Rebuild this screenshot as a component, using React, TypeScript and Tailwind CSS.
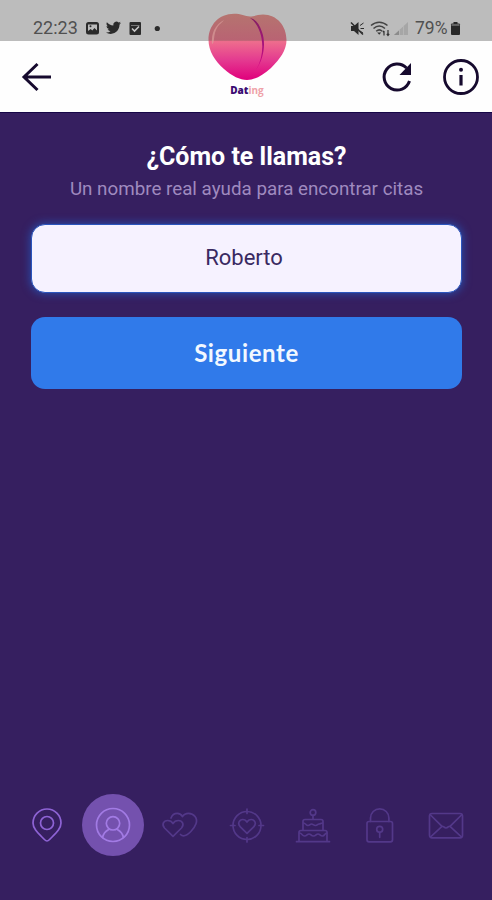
import React from 'react';

const StatusIcons = () => (
  <svg width="76" height="18" viewBox="0 0 76 18" className="text-[#2b2b2b]">
    {/* Gallery */}
    <rect x="1" y="3" width="13" height="12.5" rx="2.5" fill="currentColor" />
    <path d="M3 5.5h9v6l-2.5-2.5-2.2 2.4-1.6-1.4L3 12z" fill="#bcbcbc" />
    <circle cx="5.5" cy="7.3" r="1" fill="currentColor" />
    {/* Bird */}
    <path
      transform="translate(20.9 1.2) scale(0.63)"
      fill="currentColor"
      d="M23.953 4.57a10 10 0 01-2.825.775 4.958 4.958 0 002.163-2.723c-.951.555-2.005.959-3.127 1.184a4.92 4.92 0 00-8.384 4.482C7.69 8.095 4.067 6.13 1.64 3.162a4.822 4.822 0 00-.666 2.475c0 1.71.87 3.213 2.188 4.096a4.904 4.904 0 01-2.228-.616v.06a4.923 4.923 0 003.946 4.827 4.996 4.996 0 01-2.212.085 4.936 4.936 0 004.604 3.417 9.867 9.867 0 01-6.102 2.105c-.39 0-.779-.023-1.17-.067a13.995 13.995 0 007.557 2.209c9.053 0 13.998-7.496 13.998-13.985 0-.21 0-.42-.015-.63A9.935 9.935 0 0024 4.59z"
    />
    {/* Mail check */}
    <rect x="44.5" y="3" width="11.5" height="13" rx="1" fill="currentColor" />
    <path d="M46 6.5h8.5" stroke="#777" strokeWidth="1" />
    <path d="M47 9.5l2.5 2.5 4.5-4.5" fill="none" stroke="#c8c8c8" strokeWidth="1.6" />
    <circle cx="72.3" cy="9.5" r="2.6" fill="currentColor" />
  </svg>
);

const SignalIcons = () => (
  <svg width="60" height="18" viewBox="0 0 60 18" fill="none" className="-ml-px text-[#2b2b2b]">
    {/* Muted */}
    <path d="M1 7h3l4.5-4v13L4 12H1z" fill="currentColor" />
    <path d="M1 3.5l12 12" stroke="currentColor" strokeWidth="1.5" />
    <path d="M10 6.5l3.5-2.5M10.5 9.5H14M10 12l3 2" stroke="currentColor" strokeWidth="1" />
    {/* Wifi */}
    <path d="M21 6.5c5-4.5 11.5-4.5 16.5 0M23.5 9.5c3.5-3.2 8-3.2 11.5 0M26.2 12.3c2-1.8 4.2-1.8 6 0" stroke="#444" strokeWidth="1.5" />
    <path d="M29.2 15.8l-2-2.3h4z" fill="#333" />
    <path d="M34 16.5v-4.5M32.8 13.2L34 11.8M38 11v5M36.8 14.8L38 16.4l1.2-1.6" stroke="#333" strokeWidth="1.2" />
    {/* Cell signal */}
    <path d="M44 16L58 3v13z" fill="#a6a6a6" />
    <path d="M44 16l5-4.6V16z" fill="#8b8b8b" />
    <path d="M49.5 11v5M53.5 7.2V16" stroke="#b8b8b8" strokeWidth="0.8" />
  </svg>
);

const Logo = () => (
  <svg width="80" height="69" viewBox="0 0 80 69">
    <defs>
      <linearGradient id="peach" x1="0" y1="0" x2="0" y2="1">
        <stop offset="0" stopColor="#b5746f" />
        <stop offset="0.4" stopColor="#b96373" />
        <stop offset="0.42" stopColor="#ee6d8d" />
        <stop offset="0.7" stopColor="#e43a90" />
        <stop offset="1" stopColor="#e0007c" />
      </linearGradient>
      <linearGradient id="crease" x1="0" y1="0" x2="0" y2="1">
        <stop offset="0" stopColor="#842062" />
        <stop offset="0.5" stopColor="#a5127c" />
        <stop offset="1" stopColor="#dc0783" />
      </linearGradient>
    </defs>
    <path
      d="M43 3.5C47 3.5 50 1.5 56 1.5C70 1.5 79.5 13 79.5 27C79.5 37 73 46 64 55C55 63 47 67 40 67C33 67 25 63 17 56C8 48 1.5 38 1.5 27C1.5 12 12 .7 27 .7C34 .7 38 3 43 3.5z"
      fill="url(#peach)"
    />
    <path d="M43 5C54 12 61 36 49 57C57 46 59 30 55 19C52 10 48 6 43 5z" fill="url(#crease)" />
    <path d="M17 7C8 12 4 20 5 31C8 31 6 21 10 15C12 11 15 10 17 7z" fill="#dca09d" opacity="0.65" />
  </svg>
);

const steps = [
  {
    name: 'location',
    className: 'text-[#8e63d5]',
    art: (
      <>
        <path d="M24 40c-1 0-1.8-.7-2.600-1.500C15 32 10 27.800 10 22a14 14 0 0128 0c0 5.800-5 10-11.400 16.500C25.800 39.300 25 40 24 40z" />
        <circle cx="24" cy="22" r="6.5" />
      </>
    ),
  },
  {
    name: 'profile',
    className: 'text-[#a27be4]',
    active: true,
    art: (
      <>
        <circle cx="24" cy="24" r="16.5" />
        <circle cx="24" cy="22.3" r="6.7" />
        <path d="M13.5 36.5c.8-3.5 3-6.3 6.2-8M34.5 36.5c-.8-3.5-3-6.3-6.2-8" />
      </>
    ),
  },
  {
    name: 'hearts',
    className: 'text-[#533889]',
    art: (
      <>
        <path d="M17 35.3L8.5 27C5.5 23.5 7.5 19.5 11.7 19.5c2.3 0 4.3 1.2 5.3 3 1-1.8 3-3 5.3-3 4.2 0 6.2 4 3.2 7.5z" />
        <path d="M15 17c1-2.8 3.4-4.7 6.2-4.7 2.3 0 4.3 1.3 5.3 3.3 1.2-2 3.5-3.3 6-3.3 5.5 0 9.5 5 7.5 10.5-1.5 4.5-8 12-12.5 12-1.2 0-2.2-.5-3-1.3" />
      </>
    ),
  },
  {
    name: 'target',
    className: 'text-[#533889]',
    art: (
      <>
        <circle cx="24" cy="24.5" r="14" />
        <path d="M24 8v4.5M24 36.5V41M7.5 24.5H12M36 24.5h4.5" />
        <path d="M24 32.3l-6.7-6.5c-3.2-3.2-1-7.3 2.5-7.3 1.9 0 3.3 1 4.2 2.6.9-1.6 2.3-2.6 4.2-2.6 3.5 0 5.7 4.1 2.5 7.3z" />
      </>
    ),
  },
  {
    name: 'cake',
    className: 'text-[#533889]',
    art: (
      <>
        <circle cx="24" cy="11.5" r="2.8" />
        <path d="M24 14.3v4.2M14 29v-8.5a2 2 0 012-2h16a2 2 0 012 2V29M10 40.5v-9a2 2 0 012-2h24a2 2 0 012 2v9M7.5 40.7h33" />
        <path d="M14.5 22c2 0 2.5 2.5 4.5 2.5s2-1.5 3.5-1.5 2 1.5 4 1.5 2-1.5 3.5-1.5 2-1 3.5-1M10.5 32c2.5 0 2.5 3 5 3s2.5-2 4.5-2 2 2 4.500 2 2.500-2 4.500-2 2 2 4.500 2 2-3 4.500-3" />
      </>
    ),
  },
  {
    name: 'lock',
    className: 'text-[#533889]',
    art: (
      <>
        <rect x="11" y="20.5" width="25.5" height="20.3" rx="2" />
        <path d="M14.5 20.5V17a9.200 9.200 0 0118.400 0v3.500" />
        <circle cx="23.7" cy="28.3" r="3" />
        <path d="M23.7 31.3v5" />
      </>
    ),
  },
  {
    name: 'mail',
    className: 'text-[#533889]',
    art: (
      <>
        <rect x="7.5" y="12.5" width="33" height="24.3" rx="2.5" />
        <path d="M8.5 14l11.5 11.3c1.5-.5 2 1.700 4 1.700s2.500-2.200 4-1.700L39.500 14M8.500 36L20 25.300M39.500 36L28 25.300" />
      </>
    ),
  },
];

const StepNav = () => (
  <nav className="flex pl-[13.5px] pr-[12.5px] pb-[44.5px]">
    {steps.map((step) => (
      <button key={step.name} aria-label={step.name} className="flex-1 h-[62px] flex items-center justify-center">
        <span
          className={`size-[62px] shrink-0 rounded-full flex items-center justify-center ${step.className} ${
            step.active ? 'bg-[#7451ae]' : ''
          }`}
        >
          <svg width="48" height="48" viewBox="0 0 48 48" fill="none" stroke="currentColor" strokeWidth="1.7" strokeLinecap="round" strokeLinejoin="round">
            {step.art}
          </svg>
        </span>
      </button>
    ))}
  </nav>
);

const App = () => {
  return (
    <div className="relative w-[492px] h-[900px] overflow-hidden flex flex-col bg-[#361f60] font-['Roboto',sans-serif]">
      {/* Status bar */}
      <div className="h-[41px] shrink-0 bg-[#bcbcbc] flex items-end justify-between pl-[33px] pr-[31px] pb-[4px] text-[#505050]">
        <div className="flex items-center gap-[7px]">
          <span className="text-[18px] leading-[18px] w-[45px] whitespace-nowrap">22:23</span>
          <StatusIcons />
        </div>
        <div className="flex items-center">
          <SignalIcons />
          <span className="ml-[5px] text-[17.5px] leading-[18px] w-[35px] whitespace-nowrap">79%</span>
          <svg width="11" height="18" viewBox="0 0 11 18" className="text-[#292929]">
            <path d="M3.5 3h4v1.5H9A1 1 0 0110 6v9a1 1 0 01-1 1H2a1 1 0 01-1-1V6a1 1 0 011-1.5h1.5z" fill="currentColor" />
            <path d="M1.5 6h8" stroke="#777" strokeWidth="1.5" />
          </svg>
        </div>
      </div>

      {/* Header */}
      <header className="h-[72px] shrink-0 bg-[#fefefe] border-b border-[#160747] flex items-center justify-between pl-[20px] pr-[12px] text-[#160a2e]">
        <button aria-label="Atrás">
          <svg width="32" height="32" viewBox="0 0 32 32" fill="none" stroke="currentColor" strokeWidth="3">
            <path d="M31 16H4M17.5 3L4 16l13.5 13" />
          </svg>
        </button>
        <div className="flex items-center gap-[29px]">
          <button aria-label="Recargar">
            <svg width="32" height="32" viewBox="0 0 32 32" fill="none">
              <path d="M28.5 20A13 13 0 1125.5 7" stroke="currentColor" strokeWidth="3" />
              <path d="M30 2v12H18.5z" fill="currentColor" />
            </svg>
          </button>
          <button aria-label="Información">
            <svg width="38" height="38" viewBox="0 0 38 38" fill="none">
              <circle cx="19" cy="19" r="16.5" stroke="currentColor" strokeWidth="2.8" />
              <circle cx="19" cy="11.8" r="2" fill="currentColor" />
              <path d="M19 17v10.5" stroke="currentColor" strokeWidth="3.2" />
            </svg>
          </button>
        </div>
      </header>

      {/* Brand mark over both bars */}
      <div className="absolute left-[207px] top-[13px] w-[80px] flex flex-col items-center">
        <Logo />
        <span className="mt-[2px] text-[10px] leading-[12px] font-extrabold font-['Open_Sans',sans-serif] text-[#3b0b72]">
          Dat<span className="font-bold text-[#efa2a8]">ing</span>
        </span>
      </div>

      {/* Name form */}
      <main className="flex-1 pl-[31px] pr-[30px] pt-[30px] flex flex-col text-center">
        <h1 className="text-[25px] leading-[28px] font-bold text-white">¿Cómo te llamas?</h1>
        <p className="mt-[7px] text-[18.8px] leading-[22px] text-[#9f8abf]">Un nombre real ayuda para encontrar citas</p>
        <input
          type="text"
          defaultValue="Roberto"
          className="mt-[24px] pb-[3px] pr-[5px] h-[69px] w-full rounded-[14px] border-[1.5px] border-[#2b55bd] bg-[#f6f2ff] text-center text-[22px] text-[#3a2a62] outline-none shadow-[0_0_9px_1px_#294ba8]"
        />
        <button className="mt-[24px] h-[72px] rounded-[14px] bg-[#307aea] font-['Lato',sans-serif] text-[24px] font-bold tracking-[0.6px] text-[#f2f8ff]">
          Siguiente
        </button>
      </main>

      <StepNav />
    </div>
  );
};

export default App;
